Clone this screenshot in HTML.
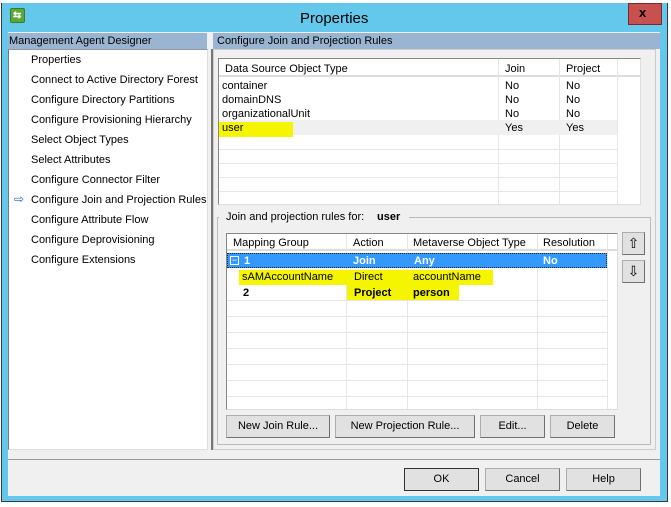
<!DOCTYPE html>
<html><head><style>
*{margin:0;padding:0;box-sizing:border-box}
body{width:671px;height:507px;background:#fff;position:relative;overflow:hidden;font-family:"Liberation Sans",sans-serif;font-size:11px;color:#000}
.a{position:absolute}
.t{position:absolute;white-space:nowrap;font-size:11px;line-height:14px}
.btn{position:absolute;background:#e1e1e1;border:1px solid #adadad;border-right-color:#707070;border-bottom-color:#707070;text-align:center;font-size:11px;line-height:20px}
.hl{position:absolute;background:#f5f500}
.vl{position:absolute;width:1px;background:#e6e6e6}
.hline{position:absolute;height:1px;background:#e6e6e6}
</style></head><body>
<div class="a" style="left:1px;top:3px;width:667px;height:499px;background:#63c8ec;border:1px solid #3a3a3a;border-top:none"></div>
<div class="a" style="left:10px;top:8px;width:15px;height:15px;background:#5aa83a;border-radius:2px;border:1px solid #3d7d25"></div>
<div class="t" style="left:13px;top:9px;color:#fff;font-size:10px;font-weight:bold">⇆</div>
<div class="t" style="left:300px;top:10px;font-size:15px;line-height:18px;color:#000">Properties</div>
<div class="a" style="left:628px;top:3px;width:34px;height:22px;background:#c75050;border:1px solid #7a2a2a"></div>
<div class="t" style="left:639px;top:6px;font-size:13px;font-weight:bold">x</div>
<div class="a" style="left:8px;top:32px;width:652px;height:464px;background:#f0f0f0"></div>
<div class="a" style="left:8px;top:33px;width:199px;height:16px;background:#9ab5d2"></div>
<div class="t" style="left:9px;top:34px">Management Agent Designer</div>
<div class="a" style="left:213px;top:33px;width:447px;height:16px;background:#9ab5d2"></div>
<div class="t" style="left:217px;top:34px">Configure Join and Projection Rules</div>
<div class="a" style="left:8px;top:49px;width:200px;height:401px;background:#fff;border-left:1px solid #777;border-top:1px solid #999;border-right:1px solid #ddd;border-bottom:1px solid #ddd"></div>
<div class="t" style="left:31px;top:53px">Properties</div>
<div class="t" style="left:31px;top:73px">Connect to Active Directory Forest</div>
<div class="t" style="left:31px;top:93px">Configure Directory Partitions</div>
<div class="t" style="left:31px;top:113px">Configure Provisioning Hierarchy</div>
<div class="t" style="left:31px;top:133px">Select Object Types</div>
<div class="t" style="left:31px;top:153px">Select Attributes</div>
<div class="t" style="left:31px;top:173px">Configure Connector Filter</div>
<div class="t" style="left:14px;top:192px;color:#1e5fd0;font-size:12px">⇨</div>
<div class="t" style="left:31px;top:193px">Configure Join and Projection Rules</div>
<div class="t" style="left:31px;top:213px">Configure Attribute Flow</div>
<div class="t" style="left:31px;top:233px">Configure Deprovisioning</div>
<div class="t" style="left:31px;top:253px">Configure Extensions</div>
<div class="a" style="left:211px;top:49px;width:2px;height:401px;background:#777"></div>
<div class="a" style="left:213px;top:49px;width:443px;height:401px;border:1px solid #ccc"></div>
<!-- top grid -->
<div class="a" style="left:218px;top:58px;width:423px;height:147px;background:#fff;border:1px solid #888;border-right-color:#ddd;border-bottom-color:#ddd"></div>
<div class="a" style="left:219px;top:59px;width:421px;height:18px;background:#fff;border-bottom:2px solid #ddd"></div>
<div class="vl" style="left:498px;top:59px;height:145px"></div>
<div class="vl" style="left:559px;top:59px;height:145px"></div>
<div class="vl" style="left:617px;top:59px;height:145px"></div>
<div class="t" style="left:225px;top:62px">Data Source Object Type</div>
<div class="t" style="left:505px;top:62px">Join</div>
<div class="t" style="left:566px;top:62px">Project</div>
<div class="a" style="left:219px;top:120px;width:398px;height:15px;background:#f0f0f0"></div>
<div class="hl" style="left:219px;top:122px;width:74px;height:15px"></div>
<div class="hline" style="left:219px;top:149px;width:398px"></div>
<div class="hline" style="left:219px;top:163px;width:398px"></div>
<div class="hline" style="left:219px;top:177px;width:398px"></div>
<div class="hline" style="left:219px;top:191px;width:398px"></div>
<div class="t" style="left:222px;top:79px">container</div><div class="t" style="left:505px;top:79px">No</div><div class="t" style="left:566px;top:79px">No</div>
<div class="t" style="left:222px;top:93px">domainDNS</div><div class="t" style="left:505px;top:93px">No</div><div class="t" style="left:566px;top:93px">No</div>
<div class="t" style="left:222px;top:107px">organizationalUnit</div><div class="t" style="left:505px;top:107px">No</div><div class="t" style="left:566px;top:107px">No</div>
<div class="t" style="left:222px;top:121px">user</div><div class="t" style="left:505px;top:121px">Yes</div><div class="t" style="left:566px;top:121px">Yes</div>
<!-- group -->
<div class="a" style="left:217px;top:217px;width:434px;height:228px;border:1px solid #bbb"></div>
<div class="a" style="left:219px;top:211px;width:190px;height:12px;background:#f0f0f0"></div>
<div class="t" style="left:226px;top:210px">Join and projection rules for:</div>
<div class="t" style="left:377px;top:210px;font-weight:bold">user</div>
<div class="a" style="left:226px;top:233px;width:392px;height:177px;background:#fff;border:1px solid #888;border-right-color:#ddd;border-bottom-color:#ddd"></div>
<div class="a" style="left:227px;top:234px;width:390px;height:17px;border-bottom:2px solid #ddd"></div>
<div class="vl" style="left:346px;top:234px;height:175px"></div>
<div class="vl" style="left:407px;top:234px;height:175px"></div>
<div class="vl" style="left:537px;top:234px;height:175px"></div>
<div class="vl" style="left:607px;top:234px;height:175px"></div>
<div class="t" style="left:233px;top:236px">Mapping Group</div>
<div class="t" style="left:353px;top:236px">Action</div>
<div class="t" style="left:413px;top:236px">Metaverse Object Type</div>
<div class="t" style="left:543px;top:236px">Resolution</div>
<div class="a" style="left:227px;top:253px;width:380px;height:15px;background:#3399ff;border:1px dotted #222"></div>
<div class="a" style="left:230px;top:256px;width:9px;height:9px;border:1px solid #fff;font-size:9px;line-height:7px;color:#fff;text-align:center">−</div>
<div class="t" style="left:244px;top:254px;color:#fff;font-weight:bold">1</div>
<div class="t" style="left:353px;top:254px;color:#fff;font-weight:bold">Join</div>
<div class="t" style="left:414px;top:254px;color:#fff;font-weight:bold">Any</div>
<div class="t" style="left:543px;top:254px;color:#fff;font-weight:bold">No</div>
<div class="hl" style="left:239px;top:270px;width:254px;height:15px"></div>
<div class="hl" style="left:347px;top:285px;width:112px;height:16px"></div>
<div class="t" style="left:242px;top:270px">sAMAccountName</div>
<div class="t" style="left:354px;top:270px">Direct</div>
<div class="t" style="left:413px;top:270px">accountName</div>
<div class="t" style="left:243px;top:286px;font-weight:bold">2</div>
<div class="t" style="left:354px;top:286px;font-weight:bold">Project</div>
<div class="t" style="left:413px;top:286px;font-weight:bold">person</div>
<div class="hline" style="left:227px;top:300px;width:380px"></div>
<div class="hline" style="left:227px;top:316px;width:380px"></div>
<div class="hline" style="left:227px;top:332px;width:380px"></div>
<div class="hline" style="left:227px;top:348px;width:380px"></div>
<div class="hline" style="left:227px;top:364px;width:380px"></div>
<div class="hline" style="left:227px;top:380px;width:380px"></div>
<div class="hline" style="left:227px;top:396px;width:380px"></div>
<div class="btn" style="left:622px;top:232px;width:23px;height:23px;font-size:14px">⇧</div>
<div class="btn" style="left:622px;top:260px;width:23px;height:23px;font-size:14px">⇩</div>
<div class="btn" style="left:226px;top:415px;width:104px;height:23px">New Join Rule...</div>
<div class="btn" style="left:335px;top:415px;width:140px;height:23px">New Projection Rule...</div>
<div class="btn" style="left:480px;top:415px;width:65px;height:23px">Edit...</div>
<div class="btn" style="left:550px;top:415px;width:65px;height:23px">Delete</div>
<div class="a" style="left:8px;top:459px;width:652px;height:1px;background:#999"></div>
<div class="btn" style="left:404px;top:468px;width:75px;height:23px;border-color:#333">OK</div>
<div class="btn" style="left:485px;top:468px;width:75px;height:23px">Cancel</div>
<div class="btn" style="left:566px;top:468px;width:75px;height:23px">Help</div>
</body></html>
